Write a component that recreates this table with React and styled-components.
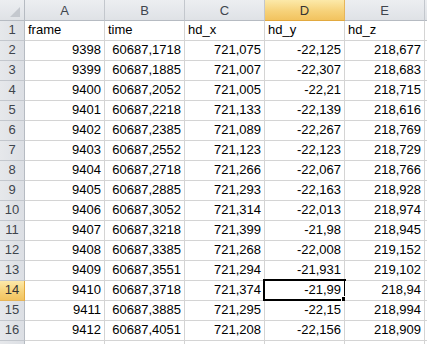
import styled, { createGlobalStyle } from "styled-components";

const GlobalStyle = createGlobalStyle`
  html, body {
    margin: 0;
    padding: 0;
    background: #ffffff;
  }
  body {
    font-family: "Liberation Sans", Arial, sans-serif;
  }
`;

const Sheet = styled.div`
  display: grid;
  grid-template-columns: 25px repeat(5, 80px) 1fr;
  grid-template-rows: 21px;
  grid-auto-rows: 20px;
  width: 427px;
  height: 344px;
  overflow: hidden;
  font-size: 13px;
  color: #000;
`;

const Corner = styled.div`
  position: relative;
  box-sizing: border-box;
  background: linear-gradient(#eceef1, #dfe2e6);
  border-right: 1px solid #b6bbc2;
  border-bottom: 1px solid #b6bbc2;
  &::after {
    content: "";
    position: absolute;
    right: 4px;
    bottom: 3px;
    width: 10px;
    height: 10px;
    background: #c4c8ce;
    clip-path: polygon(100% 0, 100% 100%, 0 100%);
  }
`;

const ColHead = styled.div`
  box-sizing: border-box;
  display: flex;
  align-items: center;
  justify-content: center;
  padding-top: 1px;
  color: ${(p) => (p.$active ? "#333333" : "#3f454d")};
  background: ${(p) =>
    p.$active
      ? "linear-gradient(#fce9a9, #f6d27a 55%, #f2c35f)"
      : "linear-gradient(#eceef1, #dfe2e6)"};
  border-right: 1px solid ${(p) => (p.$active ? "#e6b55a" : "#c3c7cd")};
  border-bottom: 1px solid ${(p) => (p.$active ? "#e2a93f" : "#b6bbc2")};
`;

const RowHead = styled.div`
  box-sizing: border-box;
  display: flex;
  align-items: flex-end;
  justify-content: center;
  padding-bottom: 3px;
  color: ${(p) => (p.$active ? "#333333" : "#3f454d")};
  background: ${(p) =>
    p.$active
      ? "linear-gradient(#fce9a9, #f6d27a 55%, #f2c35f)"
      : "linear-gradient(90deg, #e6e8eb, #dcdfe4)"};
  border-right: 1px solid ${(p) => (p.$active ? "#e2a93f" : "#b6bbc2")};
  border-bottom: 1px solid ${(p) => (p.$active ? "#e6b55a" : "#c3c7cd")};
`;

const Cell = styled.div`
  position: relative;
  box-sizing: border-box;
  display: flex;
  align-items: flex-end;
  justify-content: ${(p) => (p.$right ? "flex-end" : "flex-start")};
  padding: 0 3px 3px 3px;
  white-space: nowrap;
  border-right: 1px solid #d4d4d4;
  border-bottom: 1px solid #d4d4d4;
  background: #fff;
`;

const Selection = styled.div`
  position: absolute;
  left: -2px;
  top: -2px;
  width: 83px;
  height: 22px;
  box-sizing: border-box;
  border: 2px solid #000;
  pointer-events: none;
  &::after {
    content: "";
    position: absolute;
    right: -4px;
    bottom: -4px;
    width: 5px;
    height: 5px;
    background: #000;
    border: 1px solid #fff;
  }
`;

const columns = ["A", "B", "C", "D", "E"];
const header = ["frame", "time", "hd_x", "hd_y", "hd_z"];
const rows = [
  ["9398", "60687,1718", "721,075", "-22,125", "218,677"],
  ["9399", "60687,1885", "721,007", "-22,307", "218,683"],
  ["9400", "60687,2052", "721,005", "-22,21", "218,715"],
  ["9401", "60687,2218", "721,133", "-22,139", "218,616"],
  ["9402", "60687,2385", "721,089", "-22,267", "218,769"],
  ["9403", "60687,2552", "721,123", "-22,123", "218,729"],
  ["9404", "60687,2718", "721,266", "-22,067", "218,766"],
  ["9405", "60687,2885", "721,293", "-22,163", "218,928"],
  ["9406", "60687,3052", "721,314", "-22,013", "218,974"],
  ["9407", "60687,3218", "721,399", "-21,98", "218,945"],
  ["9408", "60687,3385", "721,268", "-22,008", "219,152"],
  ["9409", "60687,3551", "721,294", "-21,931", "219,102"],
  ["9410", "60687,3718", "721,374", "-21,99", "218,94"],
  ["9411", "60687,3885", "721,295", "-22,15", "218,994"],
  ["9412", "60687,4051", "721,208", "-22,156", "218,909"],
];

const activeCol = 3;
const activeRow = 14;

const App = () => {
  return (
    <>
      <GlobalStyle />
      <Sheet>
        <Corner />
        {columns.map((c, i) => (
          <ColHead key={c} $active={i === activeCol}>
            {c}
          </ColHead>
        ))}
        <ColHead />

        <RowHead>1</RowHead>
        {header.map((h) => (
          <Cell key={h}>{h}</Cell>
        ))}
        <Cell />

        {rows.map((r, ri) => {
          const n = ri + 2;
          return [
            <RowHead key={`h${n}`} $active={n === activeRow}>
              {n}
            </RowHead>,
            ...r.map((v, ci) => (
              <Cell key={`${n}-${ci}`} $right>
                {v}
                {n === activeRow && ci === activeCol ? <Selection /> : null}
              </Cell>
            )),
            <Cell key={`${n}-x`} />,
          ];
        })}

        {/* row 17 is only a sliver at the bottom edge */}
        <RowHead />
        {columns.map((c) => (
          <Cell key={`17${c}`} />
        ))}
        <Cell />
      </Sheet>
    </>
  );
};

export default App;
